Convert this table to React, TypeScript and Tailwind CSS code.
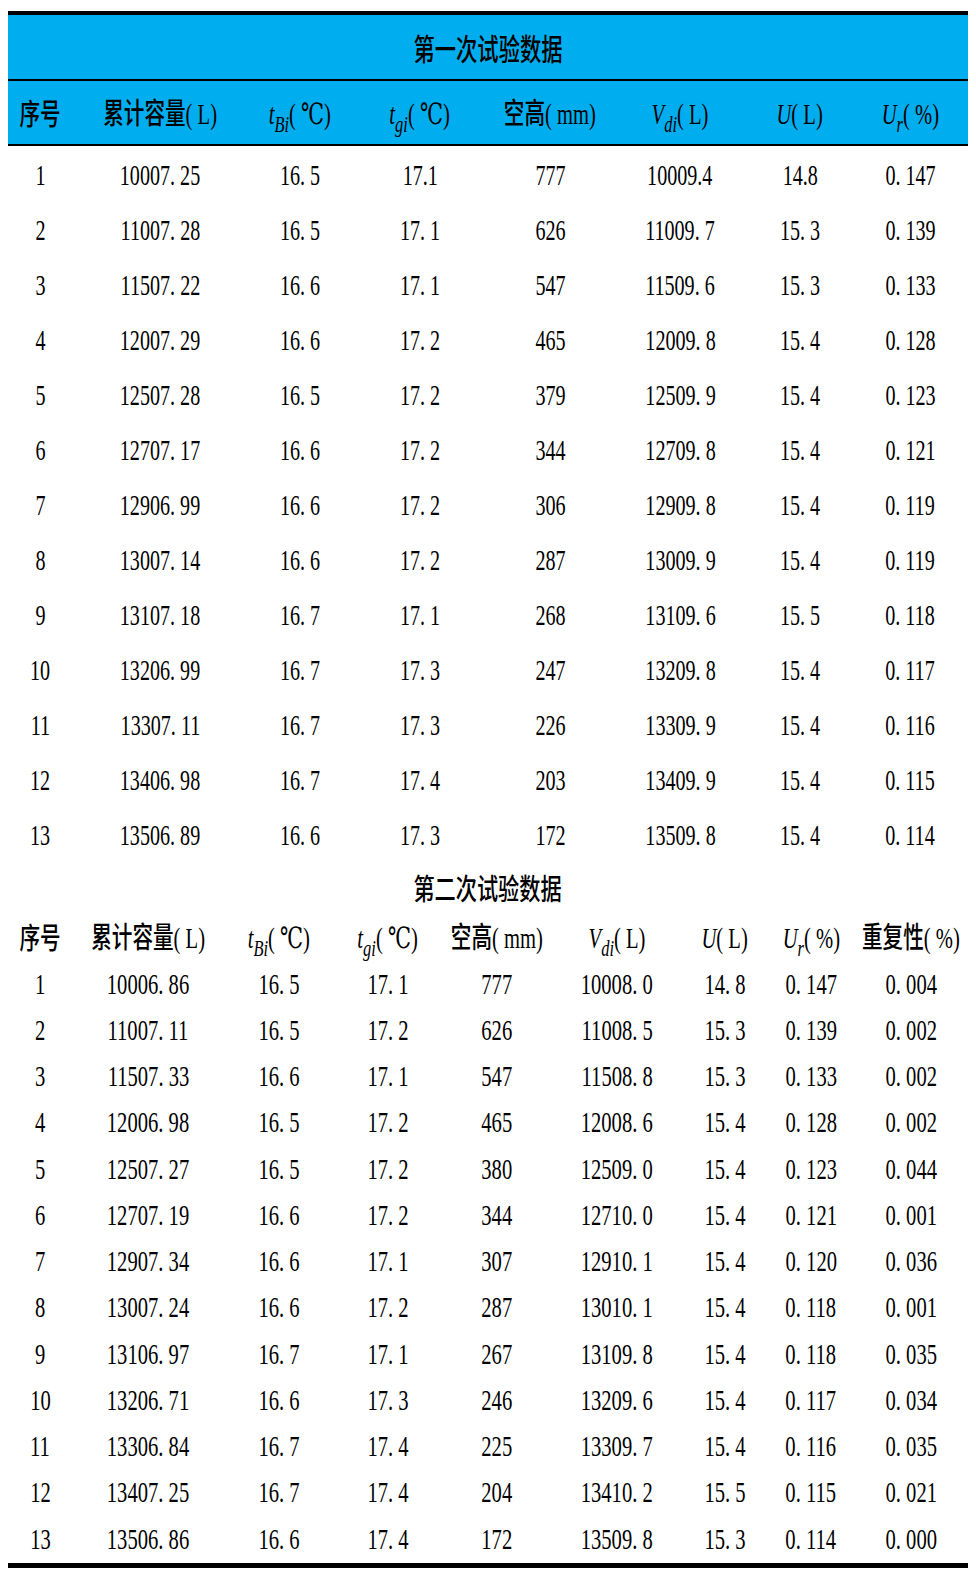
import React from "react";

const serif = "font-['Liberation_Serif','DejaVu_Serif','Noto_Sans_CJK_SC',serif]";
const cjk = "font-['Noto_Sans_CJK_SC','Noto_Sans_CJK_JP',sans-serif]";

const t1Cols = "grid grid-cols-[64px_176px_104px_136px_124px_136px_104px_116px]";
const t2Cols = "grid grid-cols-[64px_152px_110px_108px_110px_130px_86px_86px_114px]";

const t1Data: string[][] = [
  ["1", "10007. 25", "16. 5", "17.1", "777", "10009.4", "14.8", "0. 147"],
  ["2", "11007. 28", "16. 5", "17. 1", "626", "11009. 7", "15. 3", "0. 139"],
  ["3", "11507. 22", "16. 6", "17. 1", "547", "11509. 6", "15. 3", "0. 133"],
  ["4", "12007. 29", "16. 6", "17. 2", "465", "12009. 8", "15. 4", "0. 128"],
  ["5", "12507. 28", "16. 5", "17. 2", "379", "12509. 9", "15. 4", "0. 123"],
  ["6", "12707. 17", "16. 6", "17. 2", "344", "12709. 8", "15. 4", "0. 121"],
  ["7", "12906. 99", "16. 6", "17. 2", "306", "12909. 8", "15. 4", "0. 119"],
  ["8", "13007. 14", "16. 6", "17. 2", "287", "13009. 9", "15. 4", "0. 119"],
  ["9", "13107. 18", "16. 7", "17. 1", "268", "13109. 6", "15. 5", "0. 118"],
  ["10", "13206. 99", "16. 7", "17. 3", "247", "13209. 8", "15. 4", "0. 117"],
  ["11", "13307. 11", "16. 7", "17. 3", "226", "13309. 9", "15. 4", "0. 116"],
  ["12", "13406. 98", "16. 7", "17. 4", "203", "13409. 9", "15. 4", "0. 115"],
  ["13", "13506. 89", "16. 6", "17. 3", "172", "13509. 8", "15. 4", "0. 114"],
];

const t2Data: string[][] = [
  ["1", "10006. 86", "16. 5", "17. 1", "777", "10008. 0", "14. 8", "0. 147", "0. 004"],
  ["2", "11007. 11", "16. 5", "17. 2", "626", "11008. 5", "15. 3", "0. 139", "0. 002"],
  ["3", "11507. 33", "16. 6", "17. 1", "547", "11508. 8", "15. 3", "0. 133", "0. 002"],
  ["4", "12006. 98", "16. 5", "17. 2", "465", "12008. 6", "15. 4", "0. 128", "0. 002"],
  ["5", "12507. 27", "16. 5", "17. 2", "380", "12509. 0", "15. 4", "0. 123", "0. 044"],
  ["6", "12707. 19", "16. 6", "17. 2", "344", "12710. 0", "15. 4", "0. 121", "0. 001"],
  ["7", "12907. 34", "16. 6", "17. 1", "307", "12910. 1", "15. 4", "0. 120", "0. 036"],
  ["8", "13007. 24", "16. 6", "17. 2", "287", "13010. 1", "15. 4", "0. 118", "0. 001"],
  ["9", "13106. 97", "16. 7", "17. 1", "267", "13109. 8", "15. 4", "0. 118", "0. 035"],
  ["10", "13206. 71", "16. 6", "17. 3", "246", "13209. 6", "15. 4", "0. 117", "0. 034"],
  ["11", "13306. 84", "16. 7", "17. 4", "225", "13309. 7", "15. 4", "0. 116", "0. 035"],
  ["12", "13407. 25", "16. 7", "17. 4", "204", "13410. 2", "15. 5", "0. 115", "0. 021"],
  ["13", "13506. 86", "16. 6", "17. 4", "172", "13509. 8", "15. 3", "0. 114", "0. 000"],
];

function Zh({ children }: { children: React.ReactNode }) {
  return <span className={`${cjk} font-medium`}>{children}</span>;
}

function Paren({ children }: { children: React.ReactNode }) {
  return <span className={serif}>{children}</span>;
}

function Sym({ base, sub }: { base: string; sub?: string }) {
  return (
    <span className={`${serif} italic`}>
      {base}
      {sub ? (
        <span className="relative top-[0.35em] text-[0.8em] italic">{sub}</span>
      ) : null}
    </span>
  );
}

function headers(withRepeat: boolean): React.ReactNode[] {
  const h: React.ReactNode[] = [
    <Zh>序号</Zh>,
    <>
      <Zh>累计容量</Zh>
      <Paren>( L)</Paren>
    </>,
    <>
      <Sym base="t" sub="Bi" />
      <Paren>( ℃)</Paren>
    </>,
    <>
      <Sym base="t" sub="gi" />
      <Paren>( ℃)</Paren>
    </>,
    <>
      <Zh>空高</Zh>
      <Paren>( mm)</Paren>
    </>,
    <>
      <Sym base="V" sub="di" />
      <Paren>( L)</Paren>
    </>,
    <>
      <Sym base="U" />
      <Paren>( L)</Paren>
    </>,
    <>
      <Sym base="U" sub="r" />
      <Paren>( %)</Paren>
    </>,
  ];
  if (withRepeat)
    h.push(
      <>
        <Zh>重复性</Zh>
        <Paren>( %)</Paren>
      </>
    );
  return h;
}

export default function App() {
  return (
    <div className="w-[976px] min-h-[1575px] bg-white pt-[11px] pl-[8px] text-black">
      <div className="w-[960px]">
        {/* Table 1 */}
        <div className="border-t-4 border-black" />
        <div className="h-[64px] bg-[#00AEEF] flex items-center justify-center">
          <span className={`${cjk} font-medium text-[30px] leading-none inline-block scale-x-[0.71] whitespace-nowrap`}>
            第一次试验数据
          </span>
        </div>
        <div className="h-[2px] bg-black" />
        <div className={`${t1Cols} h-[63px] bg-[#00AEEF]`}>
          {headers(false).map((h, i) => (
            <div key={i} className="flex items-center justify-center pt-[1px]">
              <span className="inline-block scale-x-[0.71] whitespace-nowrap text-[29px] leading-none">{h}</span>
            </div>
          ))}
        </div>
        <div className="h-[2px] bg-black" />
        {t1Data.map((row, r) => (
          <div key={r} className={`${t1Cols} h-[55px]`}>
            {row.map((c, i) => (
              <div key={i} className="flex items-center justify-center pt-[2px]">
                <span className={`${serif} inline-block scale-x-[0.67] whitespace-pre text-[30px] leading-none`}>{c}</span>
              </div>
            ))}
          </div>
        ))}

        {/* Table 2 */}
        <div className="h-[50px] flex items-center justify-center pt-[3px]">
          <span className={`${cjk} font-medium text-[29px] leading-none inline-block scale-x-[0.73] whitespace-nowrap`}>
            第二次试验数据
          </span>
        </div>
        <div className={`${t2Cols} h-[48px]`}>
          {headers(true).map((h, i) => (
            <div key={i} className="flex items-center justify-center pt-[4px]">
              <span className="inline-block scale-x-[0.71] whitespace-nowrap text-[29px] leading-none">{h}</span>
            </div>
          ))}
        </div>
        {t2Data.map((row, r) => (
          <div key={r} className={`${t2Cols} h-[46.25px]`}>
            {row.map((c, i) => (
              <div key={i} className="flex items-center justify-center pt-[4px]">
                <span className={`${serif} inline-block scale-x-[0.71] whitespace-pre text-[29px] leading-none`}>{c}</span>
              </div>
            ))}
          </div>
        ))}
        <div className="mt-[3px] border-t-[5px] border-black" />
      </div>
    </div>
  );
}
